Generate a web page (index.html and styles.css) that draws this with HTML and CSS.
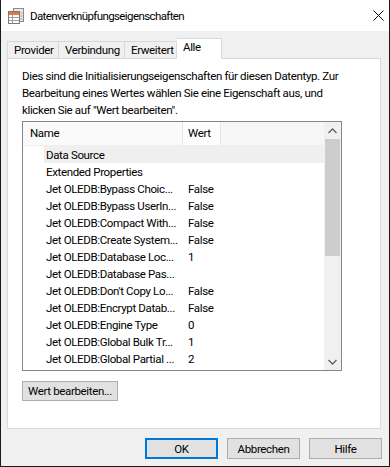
FILE: index.html
```html
<!DOCTYPE html>
<html lang="de">
<head>
<meta charset="utf-8">
<title>Datenverknüpfungseigenschaften</title>
<link rel="stylesheet" href="styles.css">
</head>
<body>
<div class="window">
  <div class="titlebar">
    <svg class="app-icon" width="16" height="16" viewBox="0 0 16 16">
      <rect x="5.5" y="0.5" width="10" height="13" fill="#e8e8e8" stroke="#8a8a8a"/>
      <rect x="0.5" y="3.5" width="11" height="12" fill="#ffffff" stroke="#7a7a7a"/>
      <rect x="1" y="4" width="10" height="3" fill="#e07a3c"/>
      <line x1="1" y1="9.5" x2="11" y2="9.5" stroke="#a0a0a0"/>
      <line x1="1" y1="12.5" x2="11" y2="12.5" stroke="#a0a0a0"/>
      <line x1="4.5" y1="7" x2="4.5" y2="15" stroke="#a0a0a0"/>
      <line x1="12.5" y1="5" x2="14.5" y2="5" stroke="#9a9a9a"/>
      <line x1="12.5" y1="8" x2="14.5" y2="8" stroke="#9a9a9a"/>
      <line x1="12.5" y1="11" x2="14.5" y2="11" stroke="#9a9a9a"/>
    </svg>
    <span class="title">Datenverknüpfungseigenschaften</span>
    <svg class="close" width="11" height="11" viewBox="0 0 11 11">
      <path d="M0.5 0.5 L10.5 10.5 M10.5 0.5 L0.5 10.5" stroke="#000" stroke-width="1" fill="none"/>
    </svg>
  </div>
  <div class="content">
    <div class="tabs">
      <div class="tab t1">Provider</div>
      <div class="tab t2">Verbindung</div>
      <div class="tab t3">Erweitert</div>
      <div class="tab active">Alle</div>
    </div>
    <div class="panel">
      <p class="intro">Dies sind die Initialisierungseigenschaften für diesen Datentyp. Zur Bearbeitung eines Wertes wählen Sie eine Eigenschaft aus, und klicken Sie auf "Wert bearbeiten".</p>
      <div class="listbox">
        <div class="list-main">
          <div class="list-header">
            <div class="hcell hname">Name</div>
            <div class="hcell hvalue">Wert</div>
            <div class="hfill"></div>
          </div>
          <div class="row selected"><span class="name">Data Source</span><span class="value"></span></div>
          <div class="row"><span class="name">Extended Properties</span><span class="value"></span></div>
          <div class="row"><span class="name">Jet OLEDB:Bypass Choic...</span><span class="value">False</span></div>
          <div class="row"><span class="name">Jet OLEDB:Bypass UserIn...</span><span class="value">False</span></div>
          <div class="row"><span class="name">Jet OLEDB:Compact With...</span><span class="value">False</span></div>
          <div class="row"><span class="name">Jet OLEDB:Create System...</span><span class="value">False</span></div>
          <div class="row"><span class="name">Jet OLEDB:Database Loc...</span><span class="value">1</span></div>
          <div class="row"><span class="name">Jet OLEDB:Database Pas...</span><span class="value"></span></div>
          <div class="row"><span class="name">Jet OLEDB:Don't Copy Lo...</span><span class="value">False</span></div>
          <div class="row"><span class="name">Jet OLEDB:Encrypt Datab...</span><span class="value">False</span></div>
          <div class="row"><span class="name">Jet OLEDB:Engine Type</span><span class="value">0</span></div>
          <div class="row"><span class="name">Jet OLEDB:Global Bulk Tr...</span><span class="value">1</span></div>
          <div class="row"><span class="name">Jet OLEDB:Global Partial ...</span><span class="value">2</span></div>
        </div>
        <div class="scrollbar">
          <div class="arrow">
            <svg width="9" height="6" viewBox="0 0 9 6"><path d="M0.5 5 L4.5 1 L8.5 5" stroke="#606060" stroke-width="1.3" fill="none"/></svg>
          </div>
          <div class="track">
            <div class="thumb"></div>
          </div>
          <div class="arrow">
            <svg width="9" height="6" viewBox="0 0 9 6"><path d="M0.5 1 L4.5 5 L8.5 1" stroke="#606060" stroke-width="1.3" fill="none"/></svg>
          </div>
        </div>
      </div>
      <button class="btn edit">Wert bearbeiten...</button>
    </div>
    <div class="footer">
      <button class="btn dlg default">OK</button>
      <button class="btn dlg">Abbrechen</button>
      <button class="btn dlg">Hilfe</button>
    </div>
  </div>
</div>
</body>
</html>
```
FILE: styles.css
```css
* { box-sizing: border-box; }
html, body { margin: 0; padding: 0; }
body {
  width: 390px;
  height: 467px;
  overflow: hidden;
  font-family: Roboto, "Liberation Sans", Arial, sans-serif;
  font-size: 11.5px;
  letter-spacing: -0.35px;
  color: #000;
  background: #f0f0f0;
}
.window {
  width: 390px;
  height: 467px;
  background: #f0f0f0;
  border-left: 1px solid #1a1a1a;
  border-right: 1px solid #1a1a1a;
  border-bottom: 1px solid #1a1a1a;
  display: flex;
  flex-direction: column;
}
.titlebar {
  height: 31px;
  background: #fff;
  display: flex;
  align-items: center;
  padding-left: 7px;
  padding-right: 5px;
}
.app-icon { flex: none; }
.title {
  margin-left: 6px;
  font-size: 11.5px;
  letter-spacing: -0.6px;
  flex: 1;
}
.close { flex: none; }
.content {
  padding: 7px 7px 0 6px;
  display: flex;
  flex-direction: column;
}
.tabs {
  display: flex;
  align-items: flex-end;
  height: 21px;
  margin-bottom: -1px;
  position: relative;
  z-index: 1;
}
.tab {
  height: 18px;
  padding-left: 6px;
  border: 1px solid #d9d9d9;
  border-right: none;
  background: #f0f0f0;
  line-height: 16px;
  white-space: nowrap;
}
.t1 { width: 51px; }
.t2 { width: 66px; }
.t3 { width: 53px; border-right: 1px solid #d9d9d9; }
.tab.active {
  height: 21px;
  width: 45px;
  background: #fff;
  border: 1px solid #d9d9d9;
  border-bottom: 1px solid #fff;
  border-left: none;
  line-height: 17px;
}
.panel {
  width: 374px;
  height: 371px;
  background: #fff;
  border: 1px solid #d9d9d9;
  padding: 9px 13px 0 14px;
  display: flex;
  flex-direction: column;
  align-items: flex-start;
}
.intro {
  margin: 0;
  line-height: 17px;
  width: 322px;
}
.listbox {
  margin-top: 2px;
  width: 320px;
  height: 250px;
  border: 1px solid #828790;
  display: flex;
  background: #fff;
}
.list-main {
  flex: 1;
  display: flex;
  flex-direction: column;
  overflow: hidden;
}
.list-header {
  height: 24px;
  display: flex;
  background: #f6f6f6;
  border-bottom: 1px solid #f0f0f0;
  flex: none;
}
.hcell {
  line-height: 23px;
  padding-left: 7px;
  border-right: 1px solid #e5e5e5;
  background: #fafafa;
}
.hname { width: 160px; }
.hvalue { width: 38px; padding-left: 5px; background: #fdfdfd; }
.hfill { flex: 1; }
.row {
  height: 17px;
  display: flex;
  line-height: 18px;
  flex: none;
}
.row .name {
  width: 165px;
  padding-left: 23px;
  white-space: nowrap;
  overflow: hidden;
}
.row .value { padding-left: 0; }
.row.selected {
  height: 18px;
  margin-top: -1px;
  line-height: 20px;
  margin-left: 21px;
  background: #efefef;
}
.row.selected .name { padding-left: 2px; width: 144px; }
.scrollbar {
  width: 17px;
  flex: none;
  display: flex;
  flex-direction: column;
  background: #f0f0f0;
}
.arrow {
  height: 17px;
  display: flex;
  align-items: center;
  justify-content: center;
  flex: none;
}
.track {
  flex: 1;
  padding: 0 1px;
}
.thumb {
  height: 117px;
  background: #cdcdcd;
}
.btn {
  font-family: Roboto, "Liberation Sans", Arial, sans-serif;
  font-size: 11.5px;
  letter-spacing: -0.35px;
  color: #000;
  background: #e1e1e1;
  border: 1px solid #adadad;
  padding: 0;
  margin: 0;
  white-space: nowrap;
}
.edit {
  margin-top: 10px;
  width: 96px;
  height: 20px;
}
.footer {
  display: flex;
  justify-content: flex-end;
  gap: 9px;
  margin-top: 9px;
}
.dlg {
  width: 73px;
  height: 21px;
}
.dlg.default {
  border: 2px solid #0078d7;
}
```
